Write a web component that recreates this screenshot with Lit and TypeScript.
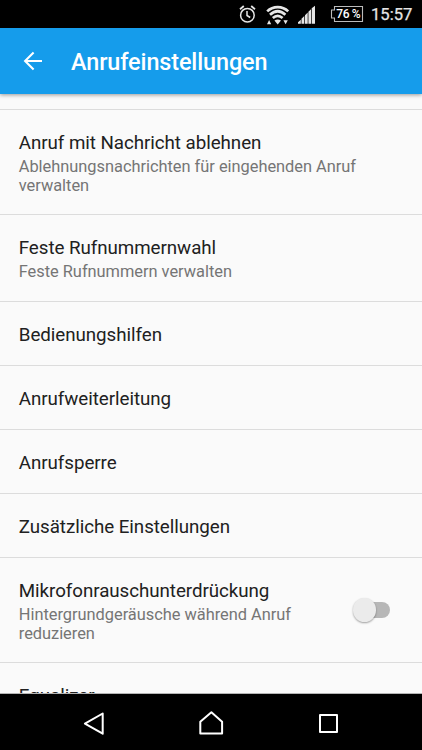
import { LitElement, html, css, svg, nothing } from "lit";
import { customElement, property } from "lit/decorators.js";

@customElement("status-bar")
class StatusBar extends LitElement {
  static styles = css`
    :host {
      display: flex;
      justify-content: flex-end;
      height: 28px;
      background: #000;
      color: #e6e6e6;
      flex: none;
    }
    .icons { display: block; width: 129px; height: 28px; flex: none; }
    .level { font: 500 12px Roboto, sans-serif; fill: #fff; }
    .clock {
      width: 55px;
      box-sizing: border-box;
      padding-left: 4px;
      font: 400 16.6px/30px Roboto, sans-serif;
      -webkit-text-stroke: 0.25px #e6e6e6;
      white-space: nowrap;
    }
  `;
  render() {
    return html`
      <svg class="icons" viewBox="238 0 129 28">
        <g fill="none" stroke="#e6e6e6" stroke-width="1.5">
          <circle cx="247.4" cy="15.2" r="6.8" />
          <path d="M247 11v4.5l3.2 2" />
          <path d="M240 9.2l3.8-3.2M255 9.2l-3.8-3.2" stroke-width="1.8" />
        </g>
        <g fill="none" stroke="#e6e6e6" stroke-width="2.7">
          <path d="M267.2 11.4C273 5.8 282.4 5.8 288.2 11.4" />
          <path d="M270 14.8C275 10.2 280.4 10.2 285.4 14.8" />
          <path d="M272.8 18C276 15.2 279.4 15.2 282.6 18" />
        </g>
        <path fill="#e6e6e6" d="M274.4 20.4Q277.7 18.6 281 20.4L277.7 24.6zM267 24.3l2.1-4.3 2.1 4.3zM283.4 20.2h4.4l-2.2 4.1z" />
        <path fill="#e6e6e6" d="M298 23.8v-1.6l2.8-2.4v4zM301.5 23.8v-5l2.8-2.8v7.8zM305 23.8v-8.6l2.7-2.6v11.2zM308.4 23.8V11.8l2.6-2.6v14.6zM311.7 23.8V8.3l3.3-2.6v18.1z" />
        <path fill="none" stroke="#bbb" stroke-width="1.1" d="M334.5 6.5h28v15h-28v-3.5h-3v-8h3z" />
        <text class="level" x="336.2" y="18.3" textLength="24.5">76 %</text>
      </svg>
      <span class="clock">15:57</span>
    `;
  }
}

@customElement("setting-row")
class SettingRow extends LitElement {
  @property() heading = "";
  @property() summary = "";
  @property({ type: Boolean }) toggle = false;

  static styles = css`
    :host {
      display: flex;
      align-items: center;
      box-sizing: border-box;
      height: 64px;
      flex: none;
      padding: 3px 20px 0 18.75px;
      border-top: 1px solid #dcdcdc;
      font-family: Roboto, sans-serif;
    }
    :host(.two) { height: 87px; padding-top: 1px; }
    :host(.three) { height: 105px; }
    .text { flex: 1; }
    .heading { font-size: 18.75px; line-height: 22px; letter-spacing: -0.05px; color: #212121; white-space: nowrap; }
    .summary { font-size: 16.4px; line-height: 19px; letter-spacing: -0.02px; color: #757575; padding-top: 3px; white-space: pre-line; }
    .switch {
      position: relative;
      width: 38px;
      height: 24px;
      margin: 0 12px 3px 0;
      display: flex;
      align-items: center;
      justify-content: flex-end;
    }
    .track { width: 32px; height: 16px; border-radius: 8px; background: #b7b7b7; }
    .thumb {
      position: absolute;
      left: 0.9px;
      top: 0.2px;
      width: 23.5px;
      height: 23.5px;
      border-radius: 50%;
      background: #ebebeb;
      box-shadow: 0 1px 2px rgba(0, 0, 0, 0.36);
    }
  `;
  render() {
    return html`
      <div class="text">
        <div class="heading">${this.heading}</div>
        ${this.summary ? html`<div class="summary">${this.summary}</div>` : nothing}
      </div>
      ${this.toggle
        ? html`<div class="switch"><div class="track"></div><div class="thumb"></div></div>`
        : nothing}
    `;
  }
}

const ROWS = [
  { heading: "Anruf mit Nachricht ablehnen", summary: "Ablehnungsnachrichten für eingehenden Anruf\nverwalten", size: "three" },
  { heading: "Feste Rufnummernwahl", summary: "Feste Rufnummern verwalten", size: "two" },
  { heading: "Bedienungshilfen" },
  { heading: "Anrufweiterleitung" },
  { heading: "Anrufsperre" },
  { heading: "Zusätzliche Einstellungen" },
  { heading: "Mikrofonrauschunterdrückung", summary: "Hintergrundgeräusche während Anruf\nreduzieren", size: "three", toggle: true },
  { heading: "Equalizer" },
];

const NAV = [
  svg`<path d="M20.7 7.5L2.9 17.6L20.7 27.7z" />`,
  svg`<path d="M0.3 27.6V15.7L11.4 6.3L22.1 15.7V27.6z" />`,
  svg`<path d="M3 9h17v17H3z" />`,
];

@customElement("app-root")
class AppRoot extends LitElement {
  static styles = css`
    :host {
      display: flex;
      flex-direction: column;
      width: 422px;
      height: 750px;
      overflow: hidden;
      background: #fafafa;
      font-family: Roboto, sans-serif;
    }
    .bar {
      display: flex;
      align-items: center;
      height: 66px;
      flex: none;
      background: #159ceb;
      color: #fff;
      box-shadow: 0 1px 4px rgba(0, 0, 0, 0.4);
      z-index: 1;
    }
    .back { width: 24px; height: 24px; margin-left: 21px; }
    .title { margin: 2px 0 0 26px; font-size: 23.4px; font-weight: 500; line-height: 30px; letter-spacing: -0.1px; }
    .list {
      flex: 1;
      min-height: 0;
      overflow: hidden;
      display: flex;
      flex-direction: column;
      padding-top: 15px;
    }
    .nav {
      display: flex;
      justify-content: space-between;
      align-items: center;
      box-sizing: border-box;
      height: 57px;
      flex: none;
      background: #000;
      border-top: 1px solid #b4b4b4;
      padding: 0 81px 0 82px;
      z-index: 1;
    }
    .nav svg {
      width: 24px;
      height: 32px;
      fill: none;
      stroke: #fff;
      stroke-width: 2;
      stroke-linejoin: round;
      overflow: visible;
    }
  `;
  render() {
    return html`
      <status-bar></status-bar>
      <header class="bar">
        <svg class="back" viewBox="0 0 24 24" fill="none" stroke="#fff" stroke-width="2.1">
          <path d="M21 12H4.2M12.6 3.5L4.1 12L12.6 20.5" />
        </svg>
        <h1 class="title">Anrufeinstellungen</h1>
      </header>
      <main class="list">
        ${ROWS.map(
          (r) => html`<setting-row
            class=${r.size ?? "one"}
            .heading=${r.heading}
            .summary=${r.summary ?? ""}
            .toggle=${r.toggle ?? false}
          ></setting-row>`
        )}
      </main>
      <nav class="nav">${NAV.map((icon) => html`<svg viewBox="0 0 24 32">${icon}</svg>`)}</nav>
    `;
  }
}
